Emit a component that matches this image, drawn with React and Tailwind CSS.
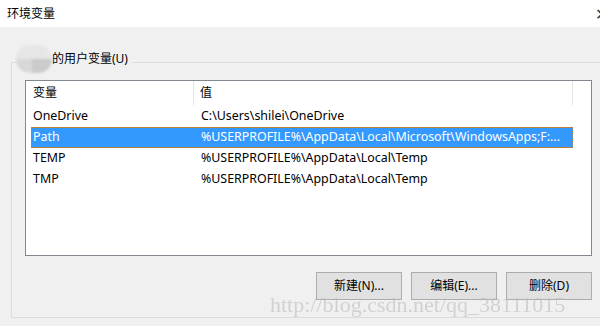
export default function App() {
  const rows = [
    { name: 'OneDrive', value: 'C:\\Users\\shilei\\OneDrive' },
    { name: 'Path', value: '%USERPROFILE%\\AppData\\Local\\Microsoft\\WindowsApps;F:...', selected: true },
    { name: 'TEMP', value: '%USERPROFILE%\\AppData\\Local\\Temp' },
    { name: 'TMP', value: '%USERPROFILE%\\AppData\\Local\\Temp' },
  ];

  return (
    <div
      className="relative w-[600px] h-[326px] overflow-hidden bg-[#f0f0f0] text-[12px] text-black"
      style={{ fontFamily: '"Noto Sans", "Noto Sans CJK SC", sans-serif' }}
    >
      {/* Title bar */}
      <div className="h-[27px] bg-white flex items-center justify-between pl-[7px]">
        <span className="leading-none">环境变量</span>
        <span className="text-[16px] leading-none text-[#333] -mr-[8px]">✕</span>
      </div>

      {/* Group box */}
      <div className="relative mt-[35px] ml-[11px] w-[600px] h-[256px] border-l border-t border-b border-[#dcdcdc]">
        <div className="absolute -top-[18px] left-[4px] flex items-center">
          {/* blurred blob */}
          <div className="relative w-[36px] h-[28px] rounded-full overflow-hidden blur-[1px]">
            <div className="absolute left-0 top-0 w-[36px] h-[14px] bg-[#e6e6e6]" />
            <div className="absolute left-0 top-[14px] w-[16px] h-[14px] bg-[#d8d8d8]" />
            <div className="absolute left-[16px] top-[14px] w-[20px] h-[14px] bg-[#cbcbcb]" />
          </div>
          <span className="bg-[#f0f0f0] pr-[4px] leading-none">的用户变量(U)</span>
        </div>

        {/* List view */}
        <div className="absolute left-[13px] top-[17px] w-[567px] h-[176px] bg-white border border-[#828790]">
          <div className="flex h-[24px] items-center">
            <div className="w-[168px] h-full pl-[7px] flex items-center border-r border-[#e5e5e5]">变量</div>
            <div className="w-[379px] h-full pl-[6px] flex items-center border-r border-[#e5e5e5]">值</div>
          </div>
          <div className="mt-[1px] ml-[5px] w-[542px] text-[12.4px]">
            {rows.map((r) => (
              <div
                key={r.name}
                className={`flex h-[21px] items-center ${
                  r.selected ? 'bg-[#3399ff] text-white outline outline-1 outline-dotted outline-[#c08040] -outline-offset-1' : ''
                }`}
              >
                <div className="w-[170px] pl-[2px]">{r.name}</div>
                <div className="whitespace-nowrap">{r.value}</div>
              </div>
            ))}
          </div>
        </div>

        {/* Buttons */}
        <div className="absolute left-[304px] top-[209px] z-10 flex gap-[9px]">
          {['新建(N)...', '编辑(E)...', '删除(D)'].map((b) => (
            <div
              key={b}
              className="w-[86px] h-[28px] bg-[#e1e1e1] border border-[#adadad] flex items-center justify-center"
            >
              {b}
            </div>
          ))}
        </div>
      </div>

      {/* Watermark */}
      <div
        className="absolute z-20 left-[270px] top-[294px] text-[22px] leading-none text-[#bdbdbd] opacity-60 whitespace-nowrap"
        style={{ fontFamily: '"Liberation Serif", serif' }}
      >
        http://blog.csdn.net/qq_38111015
      </div>
    </div>
  );
}
